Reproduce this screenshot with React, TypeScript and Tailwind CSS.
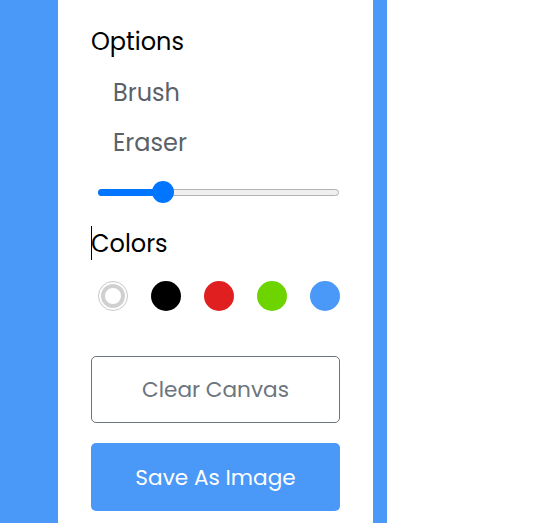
import React from "react";

export default function App() {
  const font = { fontFamily: "Poppins, Inter, 'Noto Sans', sans-serif" };
  return (
    <div className="flex h-[523px] w-full bg-[#4A98F7] overflow-hidden" style={font}>
      <section className="ml-[58px] w-[315px] shrink-0 bg-white px-[33px] pt-[17px]">
        <div className="h-[50px] flex items-center text-[24px] text-black">Options</div>
        <ul>
          <li className="h-[50px] flex items-center pl-[22px] pt-[1px] text-[24px] text-[#5A6168]">Brush</li>
          <li className="h-[50px] flex items-center pl-[22px] pt-[1px] text-[24px] text-[#5A6168]">Eraser</li>
          <li className="h-[50px] flex items-center pl-[7px] pr-[1px]">
            <div className="relative h-[7px] w-full rounded-full border border-[#b2b2b2] bg-[#efefef]">
              <div className="absolute -left-px -top-px h-[7px] w-[66px] rounded-full bg-[#0075ff]" />
              <div className="absolute left-[53px] top-1/2 h-[22px] w-[22px] -translate-y-1/2 rounded-full bg-[#0075ff]" />
            </div>
          </li>
        </ul>
        <div className="mt-[2px] h-[50px] flex items-center text-[24px] text-black">
          <span className="relative leading-[36px]">
            <span className="absolute left-0 top-0 h-[34px] w-px bg-black" />
            Colors
          </span>
        </div>
        <ul className="mt-[12px] flex justify-between pl-[7px]">
          <li className="relative h-[30px] w-[30px] rounded-full border border-[#c8c8c8] bg-white">
            <span className="absolute left-1/2 top-1/2 h-[24px] w-[24px] -translate-x-1/2 -translate-y-1/2 rounded-full border-[4px] border-[#d0d0d0] bg-white" />
          </li>
          <li className="h-[30px] w-[30px] rounded-full bg-black" />
          <li className="h-[30px] w-[30px] rounded-full bg-[#E02020]" />
          <li className="h-[30px] w-[30px] rounded-full bg-[#6DD400]" />
          <li className="h-[30px] w-[30px] rounded-full bg-[#4A98F7]" />
        </ul>
        <button className="mt-[45px] flex h-[67px] w-full items-center justify-center rounded-[5px] border border-[#6C757D] bg-white pt-[2px] text-[21.6px] text-[#6C757D]">
          Clear Canvas
        </button>
        <button className="mt-[20px] flex h-[68px] w-full items-center justify-center rounded-[5px] bg-[#4A98F7] pt-[2px] text-[21.6px] text-white">
          Save As Image
        </button>
      </section>
      <section className="ml-[14px] flex-1 bg-white" />
    </div>
  );
}
